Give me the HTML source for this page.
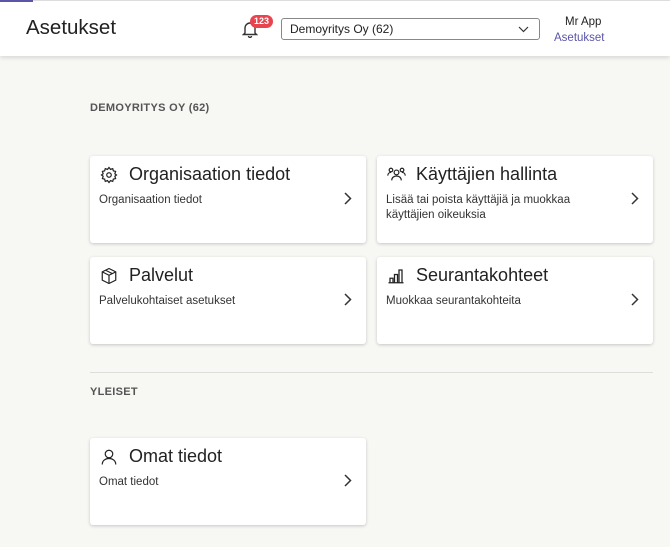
<!DOCTYPE html>
<html><head><meta charset="utf-8"><style>
*{box-sizing:border-box;margin:0;padding:0}
body{width:670px;height:547px;background:#f7f7f4;font-family:"Liberation Sans",sans-serif;color:#222;position:relative;overflow:hidden}
.hdr{position:absolute;left:0;top:0;width:670px;height:56px;background:#fff;box-shadow:0 2px 4px rgba(0,0,0,.12)}
.topline{position:absolute;left:0;top:0;width:33px;height:2px;background:#5a55a8}
.topline2{position:absolute;left:33px;top:0;width:637px;height:1px;background:#ddd}
.t{position:absolute;left:26px;top:16px;font-size:20.5px;color:#222}
.sel{position:absolute;left:281px;top:18px;width:259px;height:22px;border:1px solid #888;border-radius:3px;font-size:12px;padding:3px 8px;color:#222}
.badge{position:absolute;left:250px;top:15px;background:#e8434f;color:#fff;font-size:9px;font-weight:bold;border-radius:7px;padding:1px 4px;height:13px;line-height:11px}
.user{position:absolute;left:565px;top:16px;font-size:11.5px;color:#222}
.lnk{position:absolute;left:554px;top:32px;font-size:11.5px;color:#5a55a8}
.sec{position:absolute;left:90px;font-size:11px;font-weight:bold;color:#555;letter-spacing:.3px}
.card{position:absolute;width:276px;height:87px;background:#fff;border-radius:3px;box-shadow:0 1px 3px rgba(0,0,0,.2)}
.card h3{position:absolute;left:39px;top:8px;font-size:18px;font-weight:normal;color:#222}
.card p{position:absolute;left:9px;top:37px;font-size:11.5px;line-height:15px;color:#333;width:210px}
.card svg.ic{position:absolute;left:10px;top:10px}
.card svg.ch{position:absolute;right:14px;top:36px}
.hr{position:absolute;left:90px;top:372px;width:563px;height:1px;background:#ddd}
</style></head><body>
<div class="hdr">
<div class="topline"></div><div class="topline2"></div>
<div class="t">Asetukset</div>
<svg style="position:absolute;left:242px;top:20px" width="16" height="18" viewBox="0 0 16 18" fill="none" stroke="#333" stroke-width="1.4"><path d="M3 13V8a5 5 0 0 1 10 0v5l1.5 1.5h-13z"/><path d="M6.5 16a1.5 1.5 0 0 0 3 0"/></svg>
<div class="badge">123</div>
<div class="sel">Demoyritys Oy (62)<svg style="position:absolute;right:10px;top:7px" width="11" height="7" viewBox="0 0 11 7" fill="none" stroke="#333" stroke-width="1.2"><path d="M1 1l4.5 4.5L10 1"/></svg></div>
<div class="user">Mr App</div>
<div class="lnk">Asetukset</div>
</div>
<div class="sec" style="top:102px">DEMOYRITYS OY (62)</div>

<div class="card" style="left:90px;top:156px">
<svg class="ic" width="18" height="18" viewBox="0 0 24 24" fill="none" stroke="#222" stroke-width="1.6"><circle cx="12" cy="12" r="3"/><path d="M12 2l2 2.5 3-1 .8 3 3 .8-1 3L22 12l-2.2 1.7 1 3-3 .8-.8 3-3-1L12 22l-2-2.5-3 1-.8-3-3-.8 1-3L2 12l2.2-1.7-1-3 3-.8.8-3 3 1z"/></svg>
<h3>Organisaation tiedot</h3><p>Organisaation tiedot</p>
<svg class="ch" width="8" height="13" viewBox="0 0 8 13" fill="none" stroke="#333" stroke-width="1.5"><path d="M1 1l5.5 5.5L1 12"/></svg></div>

<div class="card" style="left:377px;top:156px">
<svg class="ic" width="19" height="16" viewBox="0 0 24 20" fill="none" stroke="#222" stroke-width="1.5"><circle cx="12" cy="8" r="3"/><path d="M6 18c0-3.5 2.7-5.5 6-5.5s6 2 6 5.5"/><circle cx="5" cy="5" r="2.3"/><path d="M1 12c0-2.5 1.8-4 4-4"/><circle cx="19" cy="5" r="2.3"/><path d="M23 12c0-2.5-1.8-4-4-4"/></svg>
<h3>Käyttäjien hallinta</h3><p>Lisää tai poista käyttäjiä ja muokkaa käyttäjien oikeuksia</p>
<svg class="ch" width="8" height="13" viewBox="0 0 8 13" fill="none" stroke="#333" stroke-width="1.5"><path d="M1 1l5.5 5.5L1 12"/></svg></div>

<div class="card" style="left:90px;top:257px">
<svg class="ic" width="18" height="18" viewBox="0 0 24 24" fill="none" stroke="#222" stroke-width="1.6"><path d="M12 2l9 4.5v11L12 22l-9-4.5v-11z"/><path d="M3 6.5L12 11l9-4.5M12 11v11M7.5 4.3l9 4.5"/></svg>
<h3>Palvelut</h3><p>Palvelukohtaiset asetukset</p>
<svg class="ch" width="8" height="13" viewBox="0 0 8 13" fill="none" stroke="#333" stroke-width="1.5"><path d="M1 1l5.5 5.5L1 12"/></svg></div>

<div class="card" style="left:377px;top:257px">
<svg class="ic" width="18" height="18" viewBox="0 0 24 24" fill="none" stroke="#222" stroke-width="1.7"><path d="M2 21h20M4 21v-6h4v6M10 21V10h4v11M16 21V4h4v17"/></svg>
<h3>Seurantakohteet</h3><p>Muokkaa seurantakohteita</p>
<svg class="ch" width="8" height="13" viewBox="0 0 8 13" fill="none" stroke="#333" stroke-width="1.5"><path d="M1 1l5.5 5.5L1 12"/></svg></div>

<div class="hr"></div>
<div class="sec" style="top:386px">YLEISET</div>

<div class="card" style="left:90px;top:438px">
<svg class="ic" width="18" height="18" viewBox="0 0 24 24" fill="none" stroke="#222" stroke-width="1.6"><circle cx="12" cy="8" r="5"/><path d="M3 22c0-5 4-8 9-8s9 3 9 8"/></svg>
<h3>Omat tiedot</h3><p>Omat tiedot</p>
<svg class="ch" width="8" height="13" viewBox="0 0 8 13" fill="none" stroke="#333" stroke-width="1.5"><path d="M1 1l5.5 5.5L1 12"/></svg></div>
</body></html>
